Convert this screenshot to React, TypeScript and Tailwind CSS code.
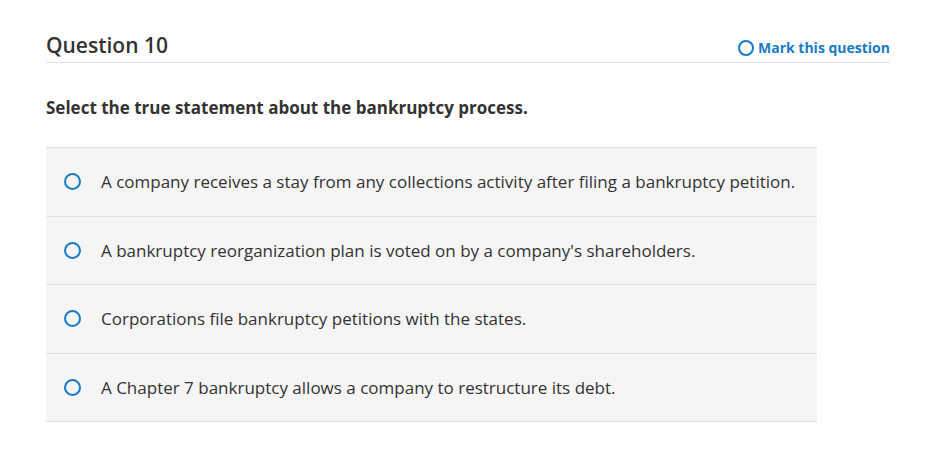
const options = [
  'A company receives a stay from any collections activity after filing a bankruptcy petition.',
  "A bankruptcy reorganization plan is voted on by a company's shareholders.",
  'Corporations file bankruptcy petitions with the states.',
  'A Chapter 7 bankruptcy allows a company to restructure its debt.',
]

export default function App() {
  return (
    <div className="min-h-[459px] bg-white pl-[46px] pr-[45px] pt-[33px] text-[#333]" style={{ fontFamily: '"Open Sans", sans-serif' }}>
      <div className="flex items-end justify-between border-b border-[#e0e0e0] pb-[4px]">
        <h2 className="text-[21px] font-semibold leading-[25px] text-[#333]">Question 10</h2>
        <button className="flex items-center gap-[4px] text-[14px] font-bold leading-[20px] text-[#1a7ac4]">
          <span className="h-[16px] w-[16px] rounded-full border-2 border-[#1a7ac4]" />
          Mark this question
        </button>
      </div>

      <p className="mt-[34px] text-[17px] font-bold leading-[21px]">Select the true statement about the bankruptcy process.</p>

      <div className="mt-[29px] w-[771px] border-t border-[#e0e0e0]">
        {options.map((o, i) => (
          <label key={i} className="flex h-[68.5px] items-center border-b border-[#e0e0e0] bg-[#f5f5f5] pl-[18px]">
            <span className="h-[17px] w-[17px] shrink-0 rounded-full border-[2.5px] border-[#1a7ac4]" />
            <span className="ml-[20px] text-[17px] leading-[21px] text-[#333]">{o}</span>
          </label>
        ))}
      </div>
    </div>
  )
}
